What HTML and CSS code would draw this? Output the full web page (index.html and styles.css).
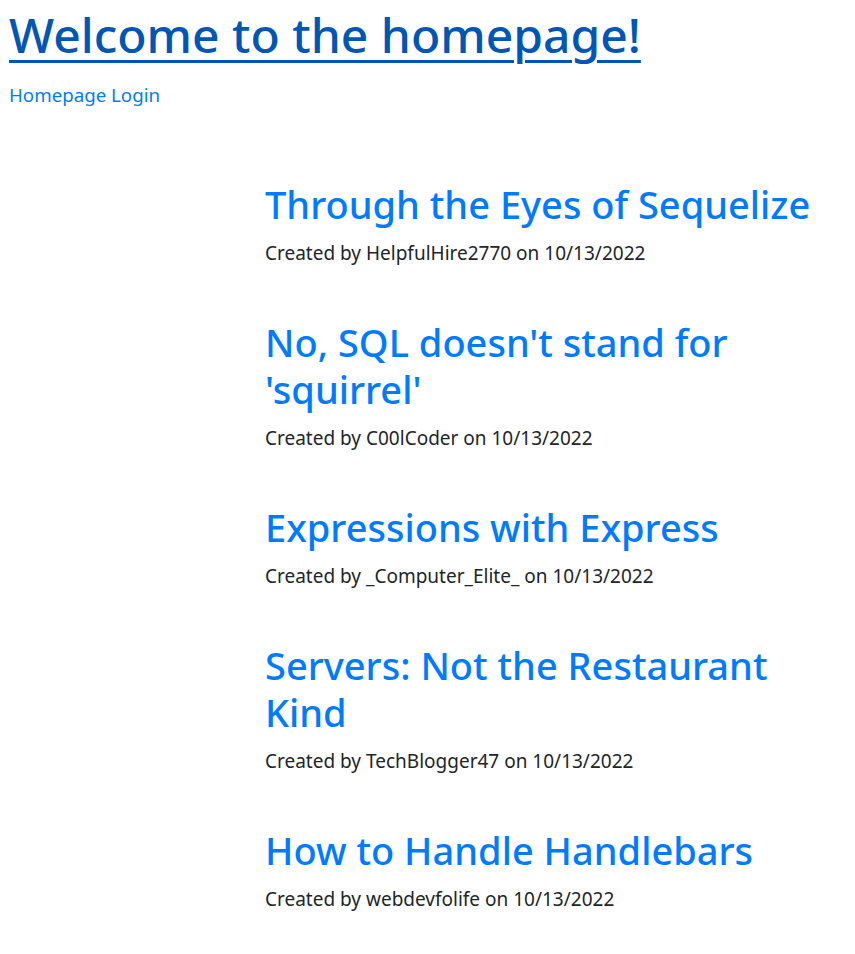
FILE: index.html
```html
<!DOCTYPE html>
<html lang="en">
<head>
<meta charset="utf-8">
<title>Homepage</title>
<link rel="stylesheet" href="styles.css">
</head>
<body>
<header class="site-header">
  <h1 class="site-title"><a href="#">Welcome to the homepage!</a></h1>
  <nav class="site-nav"><a href="#">Homepage</a> <a href="#">Login</a></nav>
</header>
<main class="layout">
  <div class="spacer"></div>
  <section class="posts">
    <article class="post">
      <h2 class="post-title"><a href="#">Through the Eyes of Sequelize</a></h2>
      <p class="post-meta">Created by HelpfulHire2770 on 10/13/2022</p>
    </article>
    <article class="post">
      <h2 class="post-title"><a href="#">No, SQL doesn't stand for 'squirrel'</a></h2>
      <p class="post-meta">Created by C00lCoder on 10/13/2022</p>
    </article>
    <article class="post">
      <h2 class="post-title"><a href="#">Expressions with Express</a></h2>
      <p class="post-meta">Created by _Computer_Elite_ on 10/13/2022</p>
    </article>
    <article class="post">
      <h2 class="post-title"><a href="#">Servers: Not the Restaurant Kind</a></h2>
      <p class="post-meta">Created by TechBlogger47 on 10/13/2022</p>
    </article>
    <article class="post">
      <h2 class="post-title"><a href="#">How to Handle Handlebars</a></h2>
      <p class="post-meta">Created by webdevfolife on 10/13/2022</p>
    </article>
  </section>
</main>
</body>
</html>
```

FILE: styles.css
```css
html, body {
  margin: 0;
  padding: 0;
  background: #fff;
}
body {
  font-family: "Noto Sans", "Open Sans", "Liberation Sans", sans-serif;
  font-size: 19px;
  line-height: 1.5;
  color: #212529;
}
a {
  color: #007bff;
  text-decoration: none;
}
.site-header {
  padding: 6px 9px 0;
}
.site-title {
  margin: 0 0 17px;
  font-size: 48px;
  font-weight: 500;
  line-height: 1.2;
}
.site-title a {
  color: #0056b3;
  text-decoration: underline;
  text-decoration-thickness: 3px;
  text-underline-offset: 7px;
}
.site-nav {
  font-size: 18.7px;
  line-height: 28.5px;
}
.layout {
  display: grid;
  grid-template-columns: 265px 1fr;
  padding: 72px 20px 40px 0;
}
.posts {
  display: flex;
  flex-direction: column;
  gap: 52px;
}
.post-title {
  margin: 0 0 11px;
  font-size: 38px;
  font-weight: 500;
  line-height: 47px;
}
.post-meta {
  margin: 0;
  font-size: 19px;
  line-height: 28px;
}
```
